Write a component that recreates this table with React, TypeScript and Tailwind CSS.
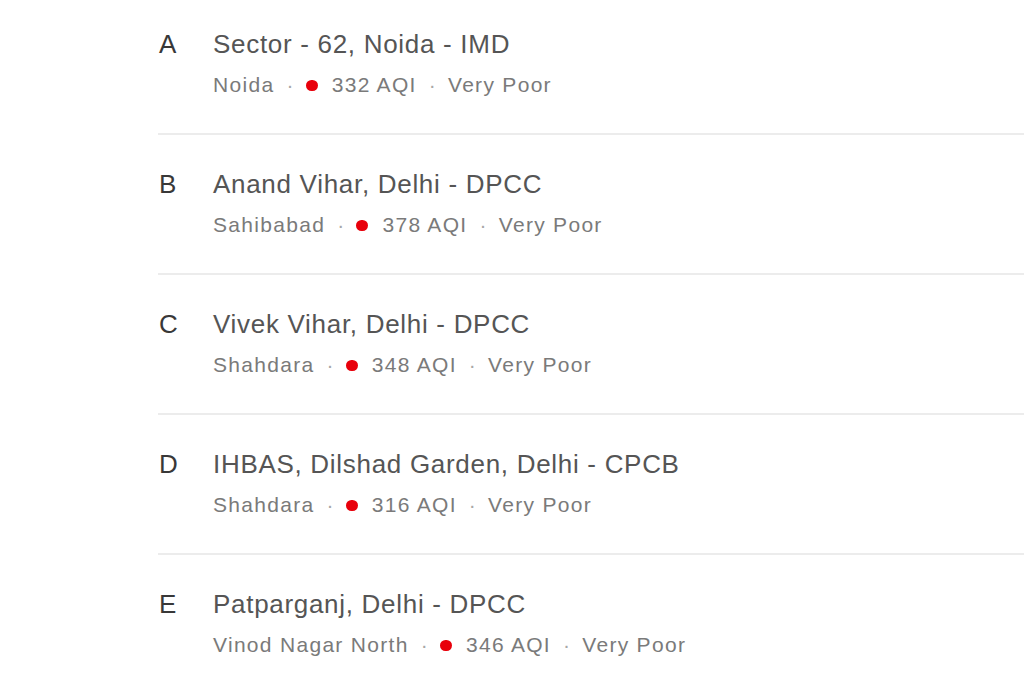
const STATIONS = [
  { letter: 'A', name: 'Sector - 62, Noida - IMD', area: 'Noida', aqi: 332, label: 'Very Poor' },
  { letter: 'B', name: 'Anand Vihar, Delhi - DPCC', area: 'Sahibabad', aqi: 378, label: 'Very Poor' },
  { letter: 'C', name: 'Vivek Vihar, Delhi - DPCC', area: 'Shahdara', aqi: 348, label: 'Very Poor' },
  { letter: 'D', name: 'IHBAS, Dilshad Garden, Delhi - CPCB', area: 'Shahdara', aqi: 316, label: 'Very Poor' },
  { letter: 'E', name: 'Patparganj, Delhi - DPCC', area: 'Vinod Nagar North', aqi: 346, label: 'Very Poor' },
]

function StationRow({ s, first }: { s: (typeof STATIONS)[number]; first: boolean }) {
  return (
    <div className={first ? 'flex pt-[28px] pb-[35px]' : 'flex pt-[33px] pb-[35px] border-t-2 border-[#ececec]'}>
      <div className="w-[55px] shrink-0 pl-[1px] text-[26px] leading-[32px] text-[#383838] tracking-[0.6px]">
        {s.letter}
      </div>
      <div className="flex flex-col">
        <div className="text-[26px] leading-[32px] text-[#555555] tracking-[0.7px] whitespace-nowrap">{s.name}</div>
        <div className="flex items-center mt-[12px] text-[21px] leading-[26px] text-[#7a7a7a] tracking-[1.3px] whitespace-nowrap">
          <span>{s.area}</span>
          <span className="ml-[12px] mr-[11px] text-[#a8a8a8]">·</span>
          <span className="w-3 h-[11px] rounded-full bg-[#e8000b] mr-[14px]" />
          <span>{s.aqi} AQI</span>
          <span className="ml-[12px] mr-[11px] text-[#a8a8a8]">·</span>
          <span>{s.label}</span>
        </div>
      </div>
    </div>
  )
}

export default function App() {
  return (
    <div className="w-[1024px] h-[683px] overflow-hidden bg-white pl-[158px]" style={{ fontFamily: "'Liberation Sans', Arial, sans-serif" }}>
      {STATIONS.map((s, i) => (
        <StationRow key={s.letter} s={s} first={i === 0} />
      ))}
    </div>
  )
}
